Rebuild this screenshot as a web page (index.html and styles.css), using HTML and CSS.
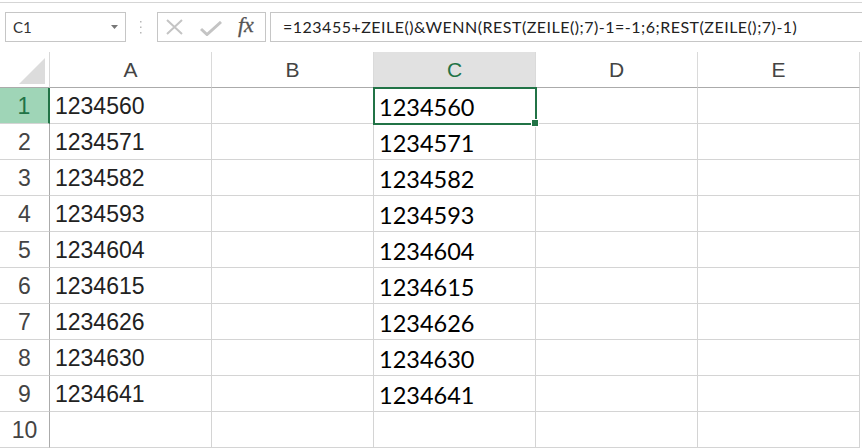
FILE: index.html
```html
<!DOCTYPE html>
<html lang="de">
<head>
    <meta charset="UTF-8">
    <title>Mappe1 - Excel</title>
    <link rel="stylesheet" href="styles.css">
</head>
<body>
    <div class="ribbon-edge"></div>

    <div class="formula-bar">
        <div class="name-box">
            <span>C1</span>
            <svg width="7" height="4" viewBox="0 0 7 4"><path d="M0 0h7L3.5 4z" fill="#777"/></svg>
        </div>
        <div class="grip">
            <svg width="3" height="13" viewBox="0 0 3 13"><rect x="1" y="0" width="1.5" height="1.5" fill="#b8b8b8"/><rect x="1" y="5.5" width="1.5" height="1.5" fill="#b8b8b8"/><rect x="1" y="11" width="1.5" height="1.5" fill="#b8b8b8"/></svg>
        </div>
        <div class="fx-box">
            <svg class="icon-cancel" width="17" height="16" viewBox="0 0 17 16"><path d="M1 1l15 14M16 1L1 15" stroke="#c4c4c4" stroke-width="2" fill="none"/></svg>
            <svg class="icon-enter" width="22" height="15" viewBox="0 0 22 15"><path d="M1 8l6 5.5L21 1" stroke="#c4c4c4" stroke-width="3" fill="none"/></svg>
            <span class="fx">fx</span>
        </div>
        <div class="formula">=123455+ZEILE()&amp;WENN(REST(ZEILE();7)-1=-1;6;REST(ZEILE();7)-1)</div>
    </div>

    <div class="sheet">
        <div class="corner"><div class="corner-tri"></div></div>
        <div class="col-head">A</div>
        <div class="col-head">B</div>
        <div class="col-head selected">C</div>
        <div class="col-head">D</div>
        <div class="col-head">E</div>

        <div class="row-head selected">1</div>
        <div class="cell">1234560</div><div class="cell"></div><div class="cell cal active">1234560</div><div class="cell"></div><div class="cell"></div>

        <div class="row-head">2</div>
        <div class="cell">1234571</div><div class="cell"></div><div class="cell cal">1234571</div><div class="cell"></div><div class="cell"></div>

        <div class="row-head">3</div>
        <div class="cell">1234582</div><div class="cell"></div><div class="cell cal">1234582</div><div class="cell"></div><div class="cell"></div>

        <div class="row-head">4</div>
        <div class="cell">1234593</div><div class="cell"></div><div class="cell cal">1234593</div><div class="cell"></div><div class="cell"></div>

        <div class="row-head">5</div>
        <div class="cell">1234604</div><div class="cell"></div><div class="cell cal">1234604</div><div class="cell"></div><div class="cell"></div>

        <div class="row-head">6</div>
        <div class="cell">1234615</div><div class="cell"></div><div class="cell cal">1234615</div><div class="cell"></div><div class="cell"></div>

        <div class="row-head">7</div>
        <div class="cell">1234626</div><div class="cell"></div><div class="cell cal">1234626</div><div class="cell"></div><div class="cell"></div>

        <div class="row-head">8</div>
        <div class="cell">1234630</div><div class="cell"></div><div class="cell cal">1234630</div><div class="cell"></div><div class="cell"></div>

        <div class="row-head">9</div>
        <div class="cell">1234641</div><div class="cell"></div><div class="cell cal">1234641</div><div class="cell"></div><div class="cell"></div>

        <div class="row-head">10</div>
        <div class="cell"></div><div class="cell"></div><div class="cell"></div><div class="cell"></div><div class="cell"></div>
    </div>
</body>
</html>
```

FILE: styles.css
```css
* {
    box-sizing: border-box;
}

body {
    margin: 0;
    width: 862px;
    height: 448px;
    overflow: hidden;
    background-color: white;
    font-family: "Liberation Sans", Arial, sans-serif;
}

.ribbon-edge {
    height: 3px;
    border-bottom: 1px solid #d5d5d5;
}

/* formula bar */
.formula-bar {
    display: flex;
    align-items: center;
    height: 30px;
    margin-top: 9px;
    padding-left: 5px;
}

.name-box {
    display: flex;
    align-items: center;
    justify-content: space-between;
    width: 121px;
    height: 30px;
    padding: 0 7px 0 7px;
    border: 1px solid #c6c6c6;
    font-family: Lato, "Open Sans", sans-serif;
    font-size: 15px;
    color: #333;
}

.grip {
    display: flex;
    align-items: center;
    width: 31px;
    padding-left: 13px;
}

.fx-box {
    display: flex;
    align-items: center;
    width: 109px;
    height: 30px;
    padding-left: 8px;
    border: 1px solid #c6c6c6;
}

.icon-cancel {
    margin-right: 17px;
}

.icon-enter {
    margin-right: 16px;
    margin-top: 2px;
}

.fx {
    font-family: "Liberation Serif", "Times New Roman", serif;
    font-style: italic;
    font-size: 22px;
    color: #555;
    margin-top: -4px;
    -webkit-text-stroke: 0.3px #555;
}

.formula {
    flex: 1;
    height: 30px;
    margin-left: 4px;
    margin-right: -2px;
    padding-left: 12px;
    border: 1px solid #c6c6c6;
    font-family: Lato, "Open Sans", sans-serif;
    font-size: 16px;
    letter-spacing: 0.5px;
    line-height: 28px;
    color: #222;
    white-space: nowrap;
}

/* sheet grid */
.sheet {
    display: grid;
    grid-template-columns: 50px repeat(5, 162px);
    grid-auto-rows: 36px;
    margin-top: 10px;
}

.corner {
    position: relative;
    border-right: 1px solid #d8d8d8;
    border-bottom: 1px solid #ababab;
}

.corner-tri {
    position: absolute;
    right: 4px;
    bottom: 3px;
    width: 0;
    height: 0;
    border-left: 26px solid transparent;
    border-bottom: 26px solid #dcdcdc;
}

.col-head {
    display: flex;
    align-items: center;
    justify-content: center;
    border-right: 1px solid #dadada;
    border-bottom: 1px solid #ababab;
    font-size: 21px;
    color: #444;
}

.col-head.selected {
    background-color: #e1e1e1;
    color: #217346;
}

.row-head {
    display: flex;
    align-items: center;
    justify-content: center;
    padding-top: 2px;
    border-right: 1px solid #ababab;
    border-bottom: 1px solid #d4d4d4;
    font-size: 23px;
    color: #444;
}

.row-head.selected {
    background-color: #9fd5b7;
    color: #217346;
    border-right: 2px solid #217346;
}

.cell {
    display: flex;
    align-items: center;
    padding-left: 5px;
    padding-top: 2px;
    border-right: 1px solid #d4d4d4;
    border-bottom: 1px solid #d4d4d4;
    font-size: 23px;
    color: #222;
}

.cell.cal {
    font-family: Lato, "Open Sans", sans-serif;
    font-size: 23.5px;
    color: #000;
}

.cell.active {
    position: relative;
}

.cell.active::before {
    content: "";
    position: absolute;
    left: -1px;
    top: -1px;
    right: -2px;
    bottom: -2px;
    border: 2px solid #217346;
}

.cell.active::after {
    content: "";
    position: absolute;
    right: -4px;
    bottom: -4px;
    width: 6px;
    height: 6px;
    background-color: #217346;
    border: 1px solid white;
}
```
